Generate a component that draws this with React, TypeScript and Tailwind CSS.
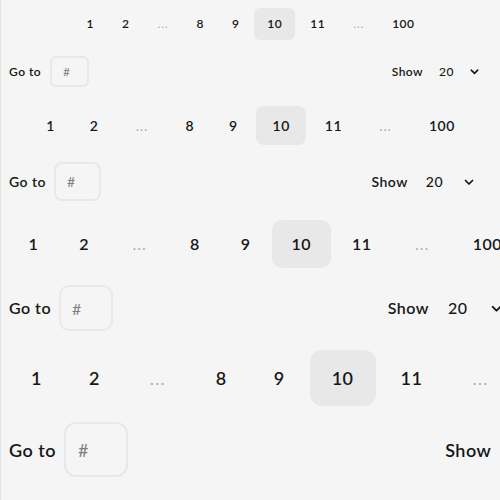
type Size = {
  text: string;
  item: string;
  ellipsis: string;
  gap: string;
  controls: string;
  input: string;
  selectGap: string;
  chevron: string;
  group: string;
};

const sizes: Size[] = [
  {
    text: "text-xs",
    item: "h-8 px-[13px] rounded-md",
    ellipsis: "h-8 w-[37px]",
    gap: "gap-0.5",
    controls: "mt-4",
    input: "h-[31px] w-[39px] rounded-md px-[11px] ml-[9px]",
    selectGap: "ml-[16px] gap-[15px] pr-3",
    chevron: "h-[11px] w-[11px]",
    group: "mb-[19px]",
  },
  {
    text: "text-sm",
    item: "h-[39px] px-[16.5px] rounded-lg",
    ellipsis: "h-[39px] w-[50px]",
    gap: "gap-0.5",
    controls: "mt-[17px]",
    input: "h-[39px] w-[47px] rounded-lg px-[11px] ml-2",
    selectGap: "ml-[18px] gap-5 pr-[17px]",
    chevron: "h-3 w-3",
    group: "mb-[19px]",
  },
  {
    text: "text-base",
    item: "h-12 px-[19.5px] rounded-[10px]",
    ellipsis: "h-12 w-[58px]",
    gap: "gap-0.5",
    controls: "mt-[17px]",
    input: "h-[46px] w-[54px] rounded-[10px] px-[11px] ml-2",
    selectGap: "ml-[19px] gap-[23px] pr-[18px]",
    chevron: "h-[13px] w-[13px]",
    group: "mb-[19px]",
  },
  {
    text: "text-lg",
    item: "h-14 px-[22px] rounded-xl",
    ellipsis: "h-14 w-[66px]",
    gap: "gap-[3px]",
    controls: "mt-4",
    input: "h-[55px] w-[64px] rounded-xl px-[12px] ml-2",
    selectGap: "ml-5 gap-[26px] pr-5",
    chevron: "h-[14px] w-[14px]",
    group: "",
  },
];

const pages: (number | "dots")[] = [1, 2, "dots", 8, 9, 10, 11, "dots", 100];

function Chevron({ className }: { className: string }) {
  return (
    <svg viewBox="0 0 24 24" fill="none" className={className} aria-hidden="true">
      <path d="M5 9l7 7 7-7" stroke="currentColor" strokeWidth="3.5" strokeLinecap="round" strokeLinejoin="round" />
    </svg>
  );
}

function Pagination({ s }: { s: Size }) {
  return (
    <div className={`w-max min-w-full ${s.group}`}>
      <div className={`flex items-center justify-center ${s.gap}`}>
        {pages.map((p, i) =>
          p === "dots" ? (
            <span key={i} className={`flex items-center justify-center text-[#adadad] ${s.ellipsis}`}>
              <span className="tracking-[0.06em]">...</span>
            </span>
          ) : (
            <button
              key={i}
              className={`flex items-center justify-center font-semibold ${s.item} ${
                p === 10 ? "bg-[#e8e8e8]" : ""
              }`}
            >
              {p}
            </button>
          )
        )}
      </div>
      <div className={`flex items-center justify-between ${s.controls}`}>
        <div className="flex items-center">
          <span className="font-semibold">Go to</span>
          <input
            placeholder="#"
            className={`border-2 border-[#e8e8e8] bg-transparent outline-none placeholder:text-[#808080] ${s.input}`}
          />
        </div>
        <div className="flex items-center">
          <span className="font-semibold">Show</span>
          <button className={`flex items-center font-medium ${s.selectGap}`}>
            20
            <Chevron className={s.chevron} />
          </button>
        </div>
      </div>
    </div>
  );
}

export default function App() {
  return (
    <div className="h-screen overflow-hidden border-l border-[#e3e3e3] bg-[#f5f5f5] px-2 pt-2 font-['Lato',sans-serif] tracking-[0.03em] text-[#171717]">
      {sizes.map((s, i) => (
        <div key={i} className={s.text}>
          <Pagination s={s} />
        </div>
      ))}
    </div>
  );
}
